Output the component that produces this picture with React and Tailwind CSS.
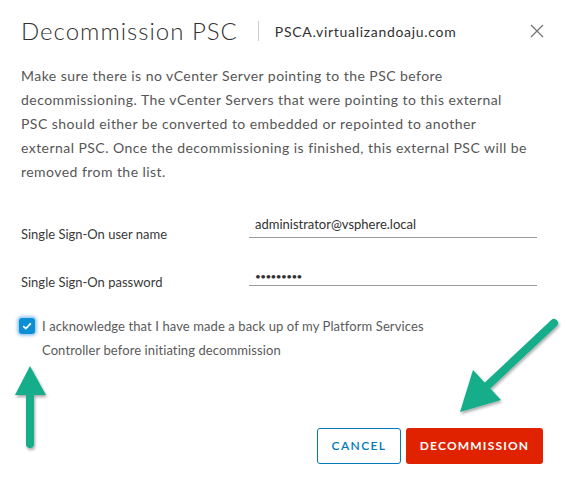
import React from 'react';

const FONT = { fontFamily: 'Lato, "Open Sans", sans-serif' };

function UpArrow() {
  return (
    <svg className="absolute left-[10px] top-[360px]" width="44" height="96" viewBox="0 0 44 96">
      <defs>
        <filter id="sh1" x="-50%" y="-50%" width="200%" height="200%">
          <feDropShadow dx="1" dy="2" stdDeviation="1.5" floodColor="#000" floodOpacity="0.35" />
        </filter>
      </defs>
      <g filter="url(#sh1)">
        <line x1="20" y1="30" x2="20" y2="84" stroke="#13ad8a" strokeWidth="8" strokeLinecap="round" />
        <polygon points="20,6 5,35 36,35" fill="#13ad8a" />
      </g>
    </svg>
  );
}

function DiagArrow() {
  return (
    <svg className="absolute left-[452px] top-[314px]" width="112" height="106" viewBox="0 0 112 106">
      <defs>
        <filter id="sh2" x="-50%" y="-50%" width="200%" height="200%">
          <feDropShadow dx="1" dy="2" stdDeviation="1.5" floodColor="#000" floodOpacity="0.35" />
        </filter>
      </defs>
      <g filter="url(#sh2)">
        <line x1="102" y1="9" x2="35" y2="72" stroke="#13ad8a" strokeWidth="8" strokeLinecap="round" />
        <polygon points="8,98 21,56 49,86" fill="#13ad8a" />
      </g>
    </svg>
  );
}

export default function App() {
  return (
    <div className="relative w-[566px] h-[482px] bg-white overflow-hidden text-[#565656]" style={FONT}>
      <div className="flex items-center h-[62px] pl-[21px] pr-[22px]">
        <h1 className="text-[24px] font-light text-[#313131] tracking-[1px]">Decommission PSC</h1>
        <div className="w-px h-[20px] bg-[#cccccc] ml-[20px] mr-[16px]" />
        <span className="text-[14px] text-[#313131] tracking-[0.7px]">PSCA.virtualizandoaju.com</span>
        <button className="ml-auto text-[#747474]">
          <svg width="14" height="14" viewBox="0 0 14 14">
            <path d="M1 1 L13 13 M13 1 L1 13" stroke="currentColor" strokeWidth="1.3" />
          </svg>
        </button>
      </div>

      <div className="pl-[21px] text-[14px] leading-[24px] mt-[2px] tracking-[0.45px]">
        <p>
          <span className="block">Make sure there is no vCenter Server pointing to the PSC before</span>
          <span className="block">decommissioning. The vCenter Servers that were pointing to this external</span>
          <span className="block">PSC should either be converted to embedded or repointed to another</span>
          <span className="block">external PSC. Once the decommissioning is finished, this external PSC will be</span>
          <span className="block">removed from the list.</span>
        </p>
      </div>

      <div className="pl-[21px] mt-[36px] text-[13px] flex flex-col gap-[24px]">
        <div className="flex items-end">
          <label className="w-[228px] leading-[20px] text-[#3a3a3a]">Single Sign-On user name</label>
          <div className="w-[288px] border-b border-[#9a9a9a] pl-[6px] pb-[3px] leading-[20px] text-[#313131] translate-y-[-6px]">
            administrator@vsphere.local
          </div>
        </div>
        <div className="flex items-end">
          <label className="w-[228px] leading-[20px] text-[#3a3a3a]">Single Sign-On password</label>
          <div className="w-[288px] h-[24px] border-b border-[#9a9a9a] pl-[6px] leading-[20px] text-[10px] text-[#313131] translate-y-[-6px] tracking-[-0.6px]">
            <span className="inline-block translate-y-[4px]">•••••••••</span>
          </div>
        </div>
      </div>

      <div className="flex items-start pl-[19px] mt-[22px] text-[13px] leading-[24px]">
        <div className="mt-[4px] w-[16px] h-[16px] rounded-[3px] bg-[#0a8fd6] shadow-[0_0_3px_2px_rgba(80,160,230,0.55)] flex items-center justify-center shrink-0">
          <svg width="10" height="8" viewBox="0 0 10 8">
            <path d="M1.2 4.2 L3.8 6.6 L8.8 1.4" stroke="#fff" strokeWidth="1.8" fill="none" />
          </svg>
        </div>
        <p className="ml-[7px] text-[#5a5a5a] tracking-[0.1px]">
          <span className="block">I acknowledge that I have made a back up of my Platform Services</span>
          <span className="block">Controller before initiating decommission</span>
        </p>
      </div>

      <div className="absolute left-0 right-0 top-[428px] flex justify-end gap-[5px] pr-[23px]">
        <button className="h-[36px] w-[84px] rounded-[3px] border border-[#0079b8] text-[#0079b8] text-[12px] font-semibold tracking-[1.4px]">
          CANCEL
        </button>
        <button className="h-[36px] w-[137px] rounded-[3px] bg-[#e12200] text-white text-[12px] font-bold tracking-[1.2px]">
          DECOMMISSION
        </button>
      </div>

      <UpArrow />
      <DiagArrow />
    </div>
  );
}
